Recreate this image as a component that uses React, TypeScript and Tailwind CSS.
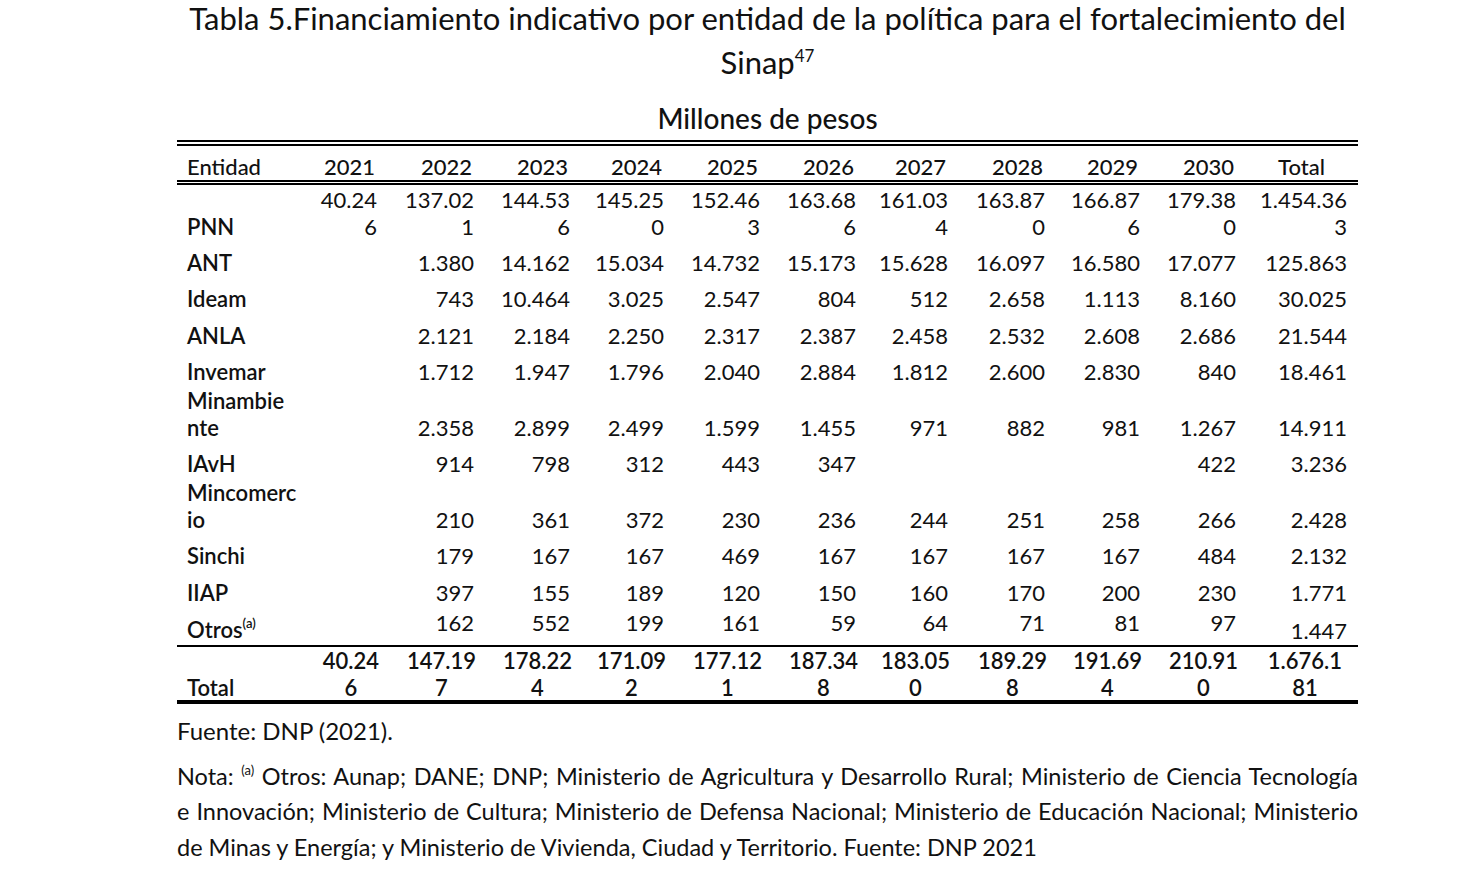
import React from 'react';

type Row = {
  name: string[];
  values: string[][];
  total: string[];
  kind: 'one' | 'two';
};

const years = ['2021', '2022', '2023', '2024', '2025', '2026', '2027', '2028', '2029', '2030'];

const one = (v: string) => (v ? [v] : []);

const rows: Row[] = [
  {
    name: ['PNN'],
    values: [
      ['40.24', '6'], ['137.02', '1'], ['144.53', '6'], ['145.25', '0'], ['152.46', '3'],
      ['163.68', '6'], ['161.03', '4'], ['163.87', '0'], ['166.87', '6'], ['179.38', '0'],
    ],
    total: ['1.454.36', '3'],
    kind: 'two',
  },
  {
    name: ['ANT'],
    values: ['', '1.380', '14.162', '15.034', '14.732', '15.173', '15.628', '16.097', '16.580', '17.077'].map(one),
    total: ['125.863'],
    kind: 'one',
  },
  {
    name: ['Ideam'],
    values: ['', '743', '10.464', '3.025', '2.547', '804', '512', '2.658', '1.113', '8.160'].map(one),
    total: ['30.025'],
    kind: 'one',
  },
  {
    name: ['ANLA'],
    values: ['', '2.121', '2.184', '2.250', '2.317', '2.387', '2.458', '2.532', '2.608', '2.686'].map(one),
    total: ['21.544'],
    kind: 'one',
  },
  {
    name: ['Invemar'],
    values: ['', '1.712', '1.947', '1.796', '2.040', '2.884', '1.812', '2.600', '2.830', '840'].map(one),
    total: ['18.461'],
    kind: 'one',
  },
  {
    name: ['Minambie', 'nte'],
    values: ['', '2.358', '2.899', '2.499', '1.599', '1.455', '971', '882', '981', '1.267'].map(one),
    total: ['14.911'],
    kind: 'two',
  },
  {
    name: ['IAvH'],
    values: ['', '914', '798', '312', '443', '347', '', '', '', '422'].map(one),
    total: ['3.236'],
    kind: 'one',
  },
  {
    name: ['Mincomerc', 'io'],
    values: ['', '210', '361', '372', '230', '236', '244', '251', '258', '266'].map(one),
    total: ['2.428'],
    kind: 'two',
  },
  {
    name: ['Sinchi'],
    values: ['', '179', '167', '167', '469', '167', '167', '167', '167', '484'].map(one),
    total: ['2.132'],
    kind: 'one',
  },
  {
    name: ['IIAP'],
    values: ['', '397', '155', '189', '120', '150', '160', '170', '200', '230'].map(one),
    total: ['1.771'],
    kind: 'one',
  },
];

const otros = ['', '162', '552', '199', '161', '59', '64', '71', '81', '97'];

const totals = [
  ['40.24', '6'], ['147.19', '7'], ['178.22', '4'], ['171.09', '2'], ['177.12', '1'],
  ['187.34', '8'], ['183.05', '0'], ['189.29', '8'], ['191.69', '4'], ['210.91', '0'],
];

const grid =
  'grid grid-cols-[108px_97px_97px_96px_94px_96px_96px_92px_97px_95px_96px_117px] items-end leading-[27px]';

const Lines = ({ lines }: { lines: string[] }) => (
  <>
    {lines.map((l, i) => (
      <div key={i}>{l}</div>
    ))}
  </>
);

export default function App() {
  return (
    <div className="min-h-[874px] bg-white text-[#111] font-['Lato','Noto_Sans',sans-serif]">
      <div className="ml-[177px] w-[1181px]">
        <h1 className="text-center text-[31px] leading-[44px] font-normal -mt-[4px]">
          Tabla 5.Financiamiento indicativo por entidad de la política para el fortalecimiento del
          <br />
          Sinap<sup className="text-[17px] -top-[12px]">47</sup>
        </h1>

        <div className="mt-[18px] text-center text-[28px] leading-[32px] font-medium">Millones de pesos</div>

        <div className="mt-[6px] border-t-[6px] border-b-[5px] border-double border-black">
          <div className={`${grid} h-[34px] font-medium text-[22px]`}>
            <div className="pl-[10px]">Entidad</div>
            {years.map((y) => (
              <div key={y} className="text-right pr-[7px]">
                {y}
              </div>
            ))}
            <div className="text-right pr-[33px]">Total</div>
          </div>
        </div>

        <div className="text-[22px]">
          {rows.map((r, idx) => (
            <div
              key={r.name.join('')}
              className={`${grid} ${
                r.kind === 'two' ? (idx === 0 ? 'pt-[0.5px]' : 'pt-[1.5px]') : 'pt-[9px] pb-[0.5px]'
              }`}
            >
              <div className="pl-[10px] font-semibold">
                <Lines lines={r.name} />
              </div>
              {r.values.map((v, i) => (
                <div key={i} className="text-right pr-[5px]">
                  <Lines lines={v} />
                </div>
              ))}
              <div className="text-right pr-[11px]">
                <Lines lines={r.total} />
              </div>
            </div>
          ))}

          <div className={`${grid} h-[38.5px]`}>
            <div className="pl-[10px] pb-[2px] font-semibold">
              Otros<sup className="text-[13px] -top-[10px]">(a)</sup>
            </div>
            {otros.map((v, i) => (
              <div key={i} className="text-right pr-[5px] pb-[9px]">
                {v}
              </div>
            ))}
            <div className="text-right pr-[11px] pb-[1px]">1.447</div>
          </div>
        </div>

        <div className="border-t-[2px] border-b-[4px] border-black">
          <div className={`${grid} h-[53px] leading-[26px] text-[22px] font-semibold`}>
            <div className="pl-[10px] pb-[1px]">Total</div>
            {totals.map((v, i) => (
              <div key={i} className="text-right pr-[3px] pb-[1px]">
                <div className="inline-block text-center">
                  <Lines lines={v} />
                </div>
              </div>
            ))}
            <div className="text-right pr-[16px] pb-[1px]">
              <div className="inline-block text-center">
                <Lines lines={['1.676.1', '81']} />
              </div>
            </div>
          </div>
        </div>

        <div className="mt-[12px] text-[24px] leading-[30px]">Fuente: DNP (2021).</div>

        <div className="mt-[13px] text-[23.5px] leading-[35.5px]">
          <div className="text-justify [text-align-last:justify] whitespace-nowrap">
            Nota: <sup className="text-[13px] -top-[10px]">(a)</sup> Otros: Aunap; DANE; DNP; Ministerio de
            Agricultura y Desarrollo Rural; Ministerio de Ciencia Tecnología
          </div>
          <div className="text-justify [text-align-last:justify] whitespace-nowrap">
            e Innovación; Ministerio de Cultura; Ministerio de Defensa Nacional; Ministerio de Educación Nacional;
            Ministerio
          </div>
          <div className="whitespace-nowrap">
            de Minas y Energía; y Ministerio de Vivienda, Ciudad y Territorio. Fuente: DNP 2021
          </div>
        </div>
      </div>
    </div>
  );
}
